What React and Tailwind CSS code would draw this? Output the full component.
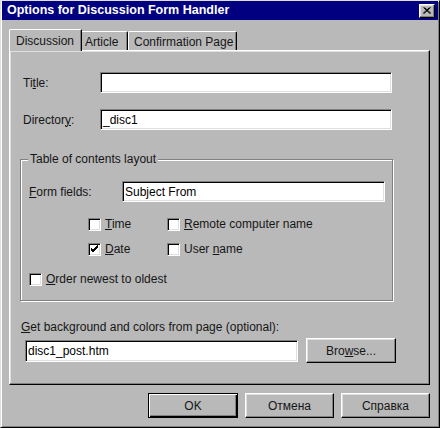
import { useState } from 'react';

const raised =
  'border border-t-white border-l-white border-r-black border-b-black shadow-[inset_-1px_-1px_0_#808080,inset_1px_1px_0_#dfdfdf]';
const sunken =
  'border border-t-[#808080] border-l-[#808080] border-r-white border-b-white shadow-[inset_1px_1px_0_#000,inset_-1px_-1px_0_#dfdfdf] bg-white';

function Field({ value, className }) {
  return (
    <div className={`${sunken} flex items-center pl-[2px] text-[12px] text-black ${className}`}>
      {value}
    </div>
  );
}

function Check({ checked, label, className = '' }) {
  return (
    <div className={`flex items-center gap-[4px] leading-[18px] ${className}`}>
      <div className={`${sunken} w-[13px] h-[13px] flex items-center justify-center`}>
        {checked && (
          <svg width="9" height="9" viewBox="0 0 9 9">
            <path d="M1 4 L3 6 L8 1 M1 5 L3 7 L8 2 M1 3 L3 5 L8 0" stroke="#000" strokeWidth="1" fill="none" />
          </svg>
        )}
      </div>
      <span className="text-[12px]">{label}</span>
    </div>
  );
}

function Button({ children, isDefault, className = '' }) {
  const look = isDefault
    ? 'border border-black shadow-[inset_1px_1px_0_#fff,inset_-1px_-1px_0_#000,inset_-2px_-2px_0_#808080]'
    : raised;
  return (
    <div className={`${look} flex items-center justify-center h-[25px] text-[12px] ${className}`}>
      {children}
    </div>
  );
}

export default function App() {
  const [tab] = useState('Discussion');

  return (
    <div
      className="w-[440px] h-[428px] bg-[#b9b9b9] text-[#161616] flex flex-col border border-t-[#dfdfdf] border-l-[#dfdfdf] border-r-black border-b-black shadow-[inset_1px_1px_0_#fff,inset_-1px_-1px_0_#808080] overflow-hidden"
      style={{ fontFamily: '"Liberation Sans", Arial, sans-serif' }}
    >
      {/* Title bar */}
      <div className="mx-[1px] h-[19px] bg-[#000080] flex items-center justify-between pl-[5px] pr-[3px]">
        <span className="text-white font-bold text-[12.5px]">Options for Discussion Form Handler</span>
        <div className={`${raised} w-[16px] h-[14px] bg-[#b9b9b9] flex items-center justify-center`}>
          <svg width="8" height="7" viewBox="0 0 8 7">
            <path d="M0.5 0.5 L7 6.5 M1.5 0.5 L8 6.5 M6.5 0.5 L0 6.5 M7.5 0.5 L1 6.5" stroke="#000" strokeWidth="1" />
          </svg>
        </div>
      </div>

      <div className="flex flex-col pl-[8px] pr-[8px] pt-[9px]">
        {/* Tabs */}
        <div className="flex items-end h-[21px]">
          <div className="relative z-10 -mb-[1px] h-[22px] w-[73px] bg-[#b9b9b9] border-t border-l border-t-white border-l-white border-r border-r-black shadow-[inset_-1px_0_0_#808080] rounded-tl-[2px] pl-[6px] pt-[2px] text-[12px]">
            {tab}
          </div>
          <div className="h-[19px] w-[46px] border-t border-t-white border-r border-r-black shadow-[inset_-1px_0_0_#808080] rounded-tr-[2px] pl-[3px] pt-[1px] text-[12px]">
            Article
          </div>
          <div className="h-[19px] w-[109px] border-t border-l border-t-white border-l-white border-r border-r-black shadow-[inset_-1px_0_0_#808080] rounded-t-[2px] pl-[5px] pt-[1px] text-[12px]">
            Confirmation Page
          </div>
        </div>

        {/* Tab panel */}
        <div className={`${raised} w-[421px] h-[335px] flex flex-col pl-[13px] pt-[21px] text-[12px]`}>
          <div className="flex items-center">
            <span className="w-[77px]">Ti<u>t</u>le:</span>
            <Field value="" className="w-[292px] h-[21px]" />
          </div>
          <div className="flex items-center mt-[16px]">
            <span className="w-[77px]">Director<u>y</u>:</span>
            <Field value="_disc1" className="w-[292px] h-[21px]" />
          </div>

          {/* Group box */}
          <div className="relative ml-[-3px] mt-[29px] w-[373px] h-[142px] border border-[#808080] shadow-[1px_1px_0_#fff,inset_1px_1px_0_#fff] flex flex-col pl-[8px] pt-[21px]">
            <span className="absolute -top-[8px] left-[7px] px-[2px] bg-[#b9b9b9] leading-[14px]">
              Table of contents layout
            </span>
            <div className="flex items-center">
              <span className="w-[93px]"><u>F</u>orm fields:</span>
              <Field value="Subject From" className="w-[263px] h-[21px]" />
            </div>
            <div className="grid grid-cols-[79px_auto] gap-y-[7px] ml-[59px] mt-[13px]">
              <Check label={<><u>T</u>ime</>} />
              <Check label={<><u>R</u>emote computer name</>} />
              <Check checked label={<><u>D</u>ate</>} />
              <Check label={<>User <u>n</u>ame</>} />
            </div>
            <Check className="mt-[12px]" label={<><u>O</u>rder newest to oldest</>} />
          </div>

          <span className="mt-[17px] ml-[-2px] leading-[18px]"><u>G</u>et background and colors from page (optional):</span>
          <div className="flex items-center mt-[2px] ml-[2px]">
            <Field value="disc1_post.htm" className="w-[273px] h-[22px]" />
            <Button className="ml-[8px] w-[90px]">Bro<u>w</u>se...</Button>
          </div>
        </div>

        {/* Dialog buttons */}
        <div className="flex justify-end gap-[7px] mt-[8px] pr-[1px]">
          <Button isDefault className="w-[90px]">OK</Button>
          <Button className="w-[89px]">Отмена</Button>
          <Button className="w-[89px]">Справка</Button>
        </div>
      </div>
    </div>
  );
}
